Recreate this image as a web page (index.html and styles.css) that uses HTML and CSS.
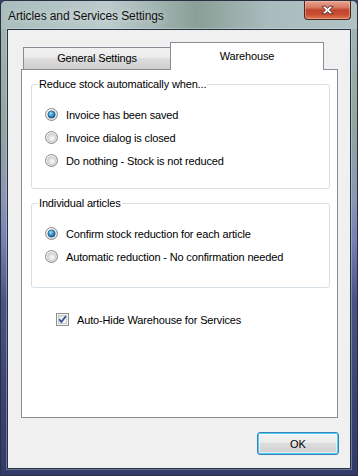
FILE: index.html
```html
<!DOCTYPE html>
<html>
<head>
<meta charset="utf-8">
<link rel="stylesheet" href="styles.css">
</head>
<body>
<div class="window">
  <div class="titlebar">
    <span class="title">Articles and Services Settings</span>
    <div class="close">
      <svg width="13" height="10" viewBox="0 0 13 10"><path d="M1 1.5 L4 1 L6.5 3.3 L9 1 L12 1.5 L8.5 5 L12 8.5 L9 9 L6.5 6.7 L4 9 L1 8.5 L4.5 5 Z" fill="#fff" stroke="#4a2a22" stroke-width="0.9" stroke-linejoin="round"/></svg>
    </div>
  </div>
  <div class="client">
    <div class="tabs">
      <div class="tab">General Settings</div>
      <div class="tab active">Warehouse</div>
    </div>
    <div class="panel">
      <fieldset class="group g1">
        <legend>Reduce stock automatically when...</legend>
        <div class="row"><svg class="radio" width="13" height="13" viewBox="0 0 13 13"><use href="#rad-on"/></svg><span>Invoice has been saved</span></div>
        <div class="row"><svg class="radio" width="13" height="13" viewBox="0 0 13 13"><use href="#rad-off"/></svg><span>Invoice dialog is closed</span></div>
        <div class="row"><svg class="radio" width="13" height="13" viewBox="0 0 13 13"><use href="#rad-off"/></svg><span>Do nothing - Stock is not reduced</span></div>
      </fieldset>
      <fieldset class="group g2">
        <legend>Individual articles</legend>
        <div class="row"><svg class="radio" width="13" height="13" viewBox="0 0 13 13"><use href="#rad-on"/></svg><span>Confirm stock reduction for each article</span></div>
        <div class="row"><svg class="radio" width="13" height="13" viewBox="0 0 13 13"><use href="#rad-off"/></svg><span>Automatic reduction - No confirmation needed</span></div>
      </fieldset>
      <div class="row check">
        <svg class="cb" width="13" height="13" viewBox="0 0 13 13">
          <rect x="0.5" y="0.5" width="12" height="12" fill="#f4f4f4" stroke="#8e8f8f"/>
          <rect x="2.5" y="2.5" width="8" height="8" fill="url(#cbg)" stroke="#c6c9ce"/>
          <path d="M3.2 6.3 L5.4 9 L9.8 3.2" fill="none" stroke="#2e4a8e" stroke-width="1.7"/>
        </svg>
        <span>Auto-Hide Warehouse for Services</span>
      </div>
    </div>
    <div class="buttons">
      <button class="ok">OK</button>
    </div>
  </div>
</div>
<svg width="0" height="0" class="defs">
  <defs>
    <radialGradient id="rbg" cx="0.35" cy="0.3" r="0.8">
      <stop offset="0" stop-color="#ffffff"/>
      <stop offset="1" stop-color="#d4d4d4"/>
    </radialGradient>
    <radialGradient id="rin" cx="0.6" cy="0.65" r="0.7">
      <stop offset="0" stop-color="#fbfbfb"/>
      <stop offset="1" stop-color="#cfcfcf"/>
    </radialGradient>
    <radialGradient id="rdot" cx="0.4" cy="0.35" r="0.7">
      <stop offset="0" stop-color="#9be0fb"/>
      <stop offset="0.5" stop-color="#3a9ad2"/>
      <stop offset="1" stop-color="#0e4f86"/>
    </radialGradient>
    <linearGradient id="cbg" x1="0" y1="0" x2="1" y2="1">
      <stop offset="0" stop-color="#dadde2"/>
      <stop offset="1" stop-color="#fbfbfc"/>
    </linearGradient>
    <g id="rad-off">
      <circle cx="6.5" cy="6.5" r="6" fill="url(#rbg)" stroke="#8d8d8d"/>
      <circle cx="6.5" cy="6.5" r="4" fill="url(#rin)" stroke="#c4c4c4" stroke-width="0.6"/>
    </g>
    <g id="rad-on">
      <circle cx="6.5" cy="6.5" r="6" fill="url(#rbg)" stroke="#8d8d8d"/>
      <circle cx="6.5" cy="6.5" r="3.6" fill="url(#rdot)" stroke="#1d4f7a" stroke-width="0.7"/>
    </g>
  </defs>
</svg>
</body>
</html>
```
FILE: styles.css
```css
html, body {
  margin: 0;
  padding: 0;
  background: #35406c;
}
.defs {
  position: absolute;
}
.window {
  box-sizing: border-box;
  width: 358px;
  height: 476px;
  display: flex;
  flex-direction: column;
  border: 1px solid #2a3040;
  border-radius: 6px 6px 0 0;
  background: linear-gradient(to bottom, #a4b8b7 0px, #93a79f 120px, #8b96b4 200px, #7580b4 240px, #4a5387 300px, #3a4273 400px, #323a68 476px);
  font-family: "Liberation Sans", Arial, sans-serif;
  font-size: 11px;
  letter-spacing: -0.15px;
  color: #000;
}
.titlebar {
  height: 28px;
  display: flex;
  align-items: flex-start;
  justify-content: space-between;
  background: linear-gradient(90deg, #a9bdbd 0%, #bccbcd 30%, #9fb2ae 45%, #8a9f97 55%, #a9bbbd 75%, #b2c3c6 100%);
  border-radius: 5px 5px 0 0;
}
.title {
  font-size: 12px;
  color: #101010;
  margin: 8px 0 0 7px;
  letter-spacing: -0.1px;
  text-shadow: 0 0 6px rgba(255,255,255,0.7);
}
.close {
  width: 45px;
  height: 18px;
  margin-right: 6px;
  border: 1px solid #4a2820;
  border-top: none;
  border-radius: 0 0 4px 4px;
  background: linear-gradient(to bottom, #e6a493 0%, #d87a63 35%, #c2452d 50%, #c94d33 75%, #de7a55 100%);
  box-shadow: inset 0 0 0 1px rgba(255,200,180,0.45);
  display: flex;
  align-items: center;
  justify-content: center;
}
.client {
  flex: 1;
  margin: 0 6px 6px 6px;
  border: 1px solid #26323e;
  box-shadow: 0 0 0 1px rgba(220,230,240,0.35);
  background: #f0f0f0;
  padding: 12px 12px 0 13px;
  display: flex;
  flex-direction: column;
}
.tabs {
  display: flex;
  align-items: flex-end;
  height: 27px;
  padding-left: 2px;
}
.tab {
  box-sizing: border-box;
  height: 22px;
  width: 148px;
  border: 1px solid #898c95;
  border-bottom: none;
  background: linear-gradient(to bottom, #f2f2f2 0%, #ebebeb 45%, #dddddd 50%, #cfcfcf 100%);
  text-align: center;
  line-height: 21px;
}
.tab.active {
  width: 154px;
  height: 28px;
  margin-left: -1px;
  margin-bottom: -1px;
  background: #fff;
  position: relative;
  z-index: 1;
  line-height: 26px;
}
.panel {
  box-sizing: border-box;
  height: 349px;
  background: #fff;
  border: 1px solid #898c95;
  padding: 8px 7px 0 9px;
}
.group {
  margin: 0;
  padding: 0;
  border: 1px solid #d5dfe5;
  border-radius: 3px;
  min-width: 0;
}
.group legend {
  margin-left: 6px;
  padding: 0 1px;
  line-height: 13px;
  height: 13px;
}
.group .row {
  padding-left: 13px;
}
.g1 {
  padding-top: 12px;
  padding-bottom: 16px;
}
.g2 {
  margin-top: 8px;
  padding-top: 12px;
  padding-bottom: 19px;
}
.row {
  display: flex;
  align-items: center;
  height: 23px;
}
.radio, .cb {
  flex: none;
  margin-right: 8px;
}
.check {
  margin-top: 20px;
  padding-left: 25px;
}
.buttons {
  display: flex;
  justify-content: flex-end;
  margin-top: 14px;
}
.ok {
  box-sizing: border-box;
  width: 82px;
  height: 23px;
  margin-right: -1px;
  font-family: "Liberation Sans", Arial, sans-serif;
  font-size: 11px;
  color: #000;
  border: 1px solid #3c7fb1;
  border-radius: 3px;
  background: linear-gradient(to bottom, #f3f3f3 0%, #ebebeb 45%, #dddddd 50%, #cfcfcf 100%);
  box-shadow: inset 0 0 0 1px #48d0f6, inset 0 0 0 2px rgba(255,255,255,0.5);
  padding: 0;
}
```
